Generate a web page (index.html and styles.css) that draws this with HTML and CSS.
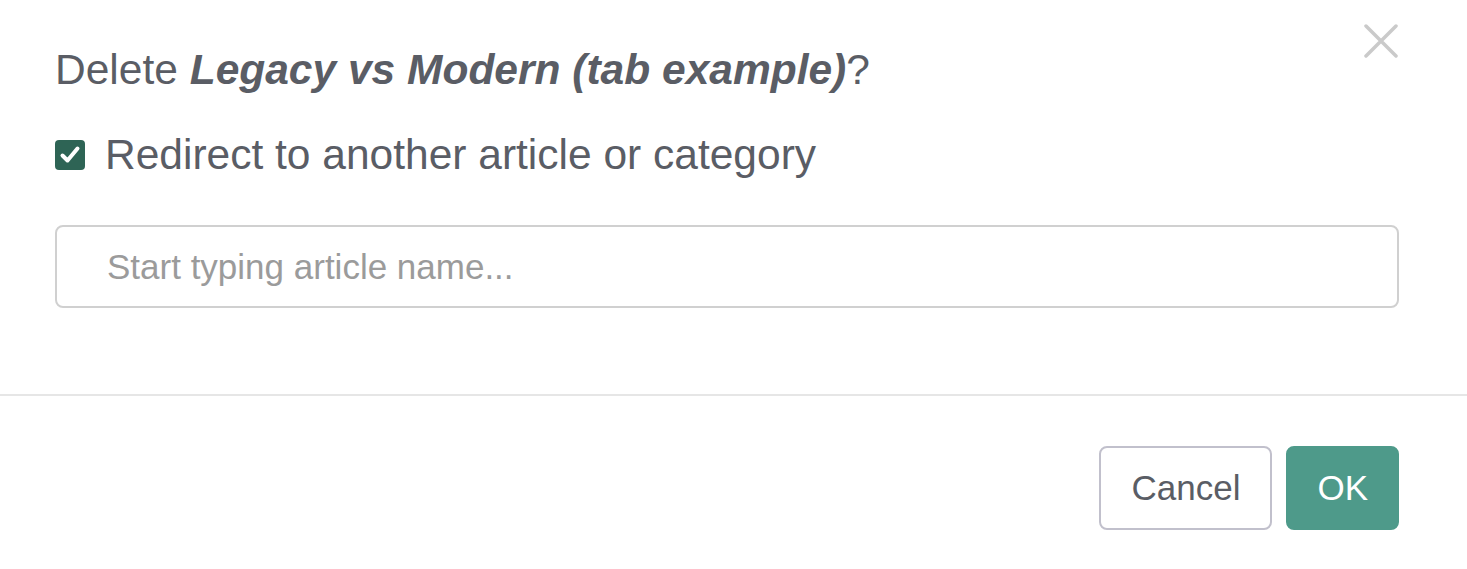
FILE: index.html
```html
<!DOCTYPE html>
<html lang="en">

<head>
    <meta charset="UTF-8">
    <title>Delete article</title>
    <link rel="stylesheet" href="styles.css">
</head>

<body>
    <div class="dialog">
        <button class="close" aria-label="Close">
            <svg width="34" height="34" viewBox="0 0 34 34">
                <path d="M2 2 L32 32 M32 2 L2 32" stroke="#cacaca" stroke-width="3.5" stroke-linecap="round" />
            </svg>
        </button>
        <div class="dialog-body">
            <h2 class="title">Delete <b><i>Legacy vs Modern (tab example)</i></b>?</h2>
            <label class="redirect">
                <span class="check">
                    <svg width="24" height="24" viewBox="0 0 24 24">
                        <path d="M4.5 12.5 L9.5 17.5 L19.5 5.5" fill="none" stroke="#fff" stroke-width="4" stroke-linecap="round" stroke-linejoin="round" />
                    </svg>
                </span>
                Redirect to another article or category
            </label>
            <input type="text" class="search" placeholder="Start typing article name...">
        </div>
        <div class="dialog-footer">
            <button class="btn btn-cancel">Cancel</button>
            <button class="btn btn-ok">OK</button>
        </div>
    </div>
</body>

</html>
```

FILE: styles.css
```css
body {
    margin: 0;
    background: #fff;
    font-family: "Liberation Sans", Arial, sans-serif;
    color: #5a5d65;
}

.dialog {
    position: relative;
    height: 569px;
}

.close {
    position: absolute;
    top: 24px;
    right: 69px;
    padding: 0;
    border: none;
    background: none;
    line-height: 0;
    cursor: pointer;
}

.dialog-body {
    padding: 45px 68px 0 55px;
    height: 396px;
    box-sizing: border-box;
    border-bottom: 2px solid #e6e6e6;
}

.title {
    margin: 0;
    font-size: 42.5px;
    font-weight: normal;
    line-height: 50px;
}

.redirect {
    display: flex;
    align-items: center;
    gap: 20px;
    margin-top: 35px;
    font-size: 42.5px;
    line-height: 50px;
}

.check {
    width: 30px;
    height: 30px;
    border-radius: 4px;
    background: #2e6455;
    display: flex;
    align-items: center;
    justify-content: center;
}

.search {
    display: block;
    width: 100%;
    height: 83px;
    margin-top: 45px;
    padding: 0 50px;
    box-sizing: border-box;
    border: 2px solid #d0d0d0;
    border-radius: 8px;
    font-family: inherit;
    font-size: 35px;
    color: #5a5d65;
}

.search::placeholder {
    color: #9b9b9b;
}

.dialog-footer {
    display: flex;
    justify-content: flex-end;
    gap: 14px;
    padding: 50px 68px 0 0;
}

.btn {
    height: 84px;
    padding: 0 30px;
    border-radius: 8px;
    font-family: inherit;
    font-size: 35px;
    cursor: pointer;
}

.btn-cancel {
    background: #fff;
    border: 2px solid #c1c0cc;
    color: #5a5d65;
}

.btn-ok {
    padding: 0 29px;
    background: #4e9a8a;
    border: 2px solid #4e9a8a;
    color: #fff;
}
```
